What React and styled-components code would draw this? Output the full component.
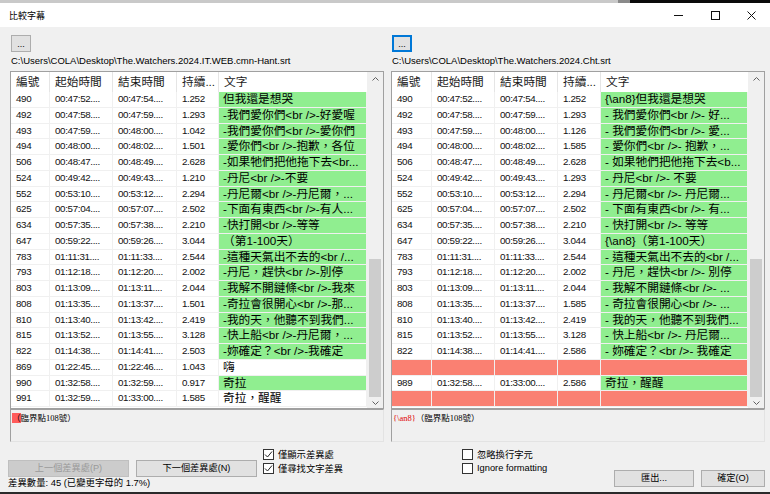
import React from 'react';
import styled, { createGlobalStyle } from 'styled-components';

const GlobalStyle = createGlobalStyle`
  html, body { margin: 0; padding: 0; background: #f0f0f0; overflow: hidden; }
  body { font-family: "Liberation Sans", "Noto Sans CJK TC", sans-serif; }
  #root { width: 770px; height: 494px; }
`;

const UI_FONT = `"Liberation Sans", "Noto Sans CJK TC", sans-serif`;

const Window = styled.div`
  width: 770px;
  height: 494px;
  display: flex;
  flex-direction: column;
  background: #f0f0f0;
  overflow: hidden;
  font-family: ${UI_FONT};
  color: #000;
`;

const TopStrip = styled.div`
  display: flex;
  height: 3px;
  flex: none;
`;

const StripPart = styled.div`
  background: ${(p) => p.$c};
  width: ${(p) => (p.$w ? `${p.$w}px` : 'auto')};
  flex: ${(p) => (p.$w ? 'none' : 1)};
`;

const TitleBar = styled.div`
  height: 24px;
  flex: none;
  background: #fff;
  display: flex;
  align-items: center;
`;

const Title = styled.div`
  flex: 1;
  padding-left: 9px;
  font-size: 9px;
  font-family: "Noto Sans CJK TC", sans-serif;
  color: #000;
`;

const Controls = styled.div`
  display: flex;
  height: 100%;
`;

const CtrlBtn = styled.div`
  width: 36.5px;
  height: 100%;
  display: flex;
  align-items: center;
  justify-content: center;
`;

const Panels = styled.div`
  flex: none;
  display: flex;
  gap: 7px;
  padding: 8px 5px 0 10px;
`;

const Column = styled.div`
  width: 374px;
  display: flex;
  flex-direction: column;
`;

const BrowseBtn = styled.div`
  width: 20px;
  height: 17px;
  margin-left: 1px;
  box-sizing: border-box;
  background: #e1e1e1;
  border: 1px solid ${(p) => (p.$focused ? '#0078d7' : '#adadad')};
  box-shadow: ${(p) => (p.$focused ? 'inset 0 0 0 1px #0078d7' : 'none')};
  font-size: 9px;
  line-height: 16px;
  text-align: center;
  color: #000;
`;

const PathLabel = styled.div`
  height: 19px;
  line-height: 18px;
  padding-left: 1px;
  font-size: 9.5px;
  white-space: nowrap;
  color: #000;
`;

const List = styled.div`
  height: 338px;
  box-sizing: border-box;
  border: 1px solid #a0a0a0;
  background: #fff;
  display: flex;
`;

const ListMain = styled.div`
  flex: 1;
  display: flex;
  flex-direction: column;
  overflow: hidden;
`;

const HeaderRow = styled.div`
  display: grid;
  grid-template-columns: ${(p) => p.$cols};
  height: 20px;
  flex: none;
`;

const HeaderCell = styled.div`
  border-right: 1px solid #e5e5e5;
  padding-left: 5px;
  font-size: 11.7px;
  line-height: 20px;
  white-space: nowrap;
  overflow: hidden;
  color: #1a1a1a;
  &:last-child { border-right: none; }
`;

const Row = styled.div`
  display: grid;
  grid-template-columns: ${(p) => p.$cols};
  height: 15.75px;
  flex: none;
`;

const Cell = styled.div`
  box-sizing: border-box;
  border-right: 1px solid #f0f0f0;
  border-bottom: 1px solid #f0f0f0;
  background: ${(p) => p.$bg || '#fff'};
  padding-left: ${(p) => (p.$text ? 4 : 5)}px;
  font-size: ${(p) => (p.$text ? '11.7px' : '9.8px')};
  letter-spacing: ${(p) => (p.$text ? '0' : '-0.35px')};
  line-height: 14.5px;
  white-space: nowrap;
  overflow: hidden;
  color: ${(p) => (p.$text ? '#000' : '#111')};
`;

const ScrollBar = styled.div`
  width: 16px;
  flex: none;
  background: #f0f0f0;
  display: flex;
  flex-direction: column;
  align-items: center;
`;

const ScrollArrow = styled.div`
  width: 100%;
  height: ${(p) => p.$h}px;
  flex: none;
  display: flex;
  align-items: center;
  justify-content: center;
`;

const ScrollTrack = styled.div`
  flex: 1;
`;

const ScrollThumb = styled.div`
  width: 12px;
  height: 138px;
  flex: none;
  background: #cdcdcd;
`;

const DiffBox = styled.div`
  height: 33px;
  box-sizing: border-box;
  border: 1px solid;
  border-color: #a0a0a0 #e3e3e3 #e3e3e3 #a0a0a0;
  background: #f0f0f0;
  padding: 2px 1px;
  font-family: "Liberation Serif", "Noto Sans CJK TC", serif;
  font-size: 8.5px;
  line-height: 12px;
  white-space: nowrap;
`;

const Marked = styled.span`
  background: #ff5c5c;
`;

const Inserted = styled.span`
  color: #e00000;
`;

const Bottom = styled.div`
  flex: 1;
  display: flex;
  padding: 0 5px 0 8px;
`;

const LeftActions = styled.div`
  width: 249px;
  padding-top: 18px;
  display: flex;
  flex-direction: column;
`;

const ButtonRow = styled.div`
  display: flex;
  gap: 7px;
`;

const Button = styled.div`
  width: ${(p) => p.$w}px;
  height: 17px;
  box-sizing: border-box;
  background: ${(p) => (p.$disabled ? '#cccccc' : '#e1e1e1')};
  border: 1px solid ${(p) => (p.$disabled ? '#bfbfbf' : '#adadad')};
  color: ${(p) => (p.$disabled ? '#9a9a9a' : '#000')};
  font-size: 9.2px;
  line-height: 15px;
  text-align: center;
  white-space: nowrap;
`;

const Status = styled.div`
  height: 12px;
  line-height: 12px;
  font-size: 9.4px;
  white-space: nowrap;
`;

const CheckGroup = styled.div`
  width: ${(p) => p.$w}px;
  margin-left: ${(p) => p.$ml || 0}px;
  padding-top: 5px;
  display: flex;
  flex-direction: column;
`;

const CheckRow = styled.div`
  height: 14px;
  display: flex;
  align-items: center;
  gap: 4px;
  font-size: 9.3px;
  white-space: nowrap;
`;

const Box = styled.div`
  width: 11px;
  height: 11px;
  box-sizing: border-box;
  border: 1px solid #333;
  background: #fff;
  display: flex;
  align-items: center;
  justify-content: center;
  flex: none;
`;

const RightActions = styled.div`
  margin-left: auto;
  padding-top: 28px;
  display: flex;
  gap: 7px;
`;

const BottomEdge = styled.div`
  height: 2px;
  flex: none;
  background: #2a2a2a;
`;

const Chevron = ({ up }) => (
  <svg width="7" height="4" viewBox="0 0 7 4">
    <polyline
      points={up ? '0.5,3.5 3.5,0.5 6.5,3.5' : '0.5,0.5 3.5,3.5 6.5,0.5'}
      fill="none"
      stroke="#606060"
      strokeWidth="1"
    />
  </svg>
);

const Check = ({ checked, label }) => (
  <CheckRow>
    <Box>
      {checked && (
        <svg width="9" height="9" viewBox="0 0 9 9">
          <polyline points="1,4.5 3.5,7 8,1.5" fill="none" stroke="#222" strokeWidth="1" />
        </svg>
      )}
    </Box>
    <span>{label}</span>
  </CheckRow>
);

const GREEN = '#90ee90';
const RED = '#fa8072';

const leftRows = [
  ['490', '00:47:52....', '00:47:54....', '1.252', '但我還是想哭', 'g'],
  ['492', '00:47:58....', '00:47:59....', '1.293', '-我們愛你們<br />-好愛喔', 'g'],
  ['493', '00:47:59....', '00:48:00....', '1.042', '-我們愛你們<br />-愛你們', 'g'],
  ['494', '00:48:00....', '00:48:02....', '1.501', '-愛你們<br />-抱歉，各位', 'g'],
  ['506', '00:48:47....', '00:48:49....', '2.628', '-如果牠們把他拖下去<br...', 'g'],
  ['524', '00:49:42....', '00:49:43....', '1.210', '-丹尼<br />-不要', 'g'],
  ['552', '00:53:10....', '00:53:12....', '2.294', '-丹尼爾<br />-丹尼爾，...', 'g'],
  ['625', '00:57:04....', '00:57:07....', '2.502', '-下面有東西<br />-有人...', 'g'],
  ['634', '00:57:35....', '00:57:38....', '2.210', '-快打開<br />-等等', 'g'],
  ['647', '00:59:22....', '00:59:26....', '3.044', '（第1-100天）', 'g'],
  ['783', '01:11:31....', '01:11:33....', '2.544', '-這種天氣出不去的<br /...', 'g'],
  ['793', '01:12:18....', '01:12:20....', '2.002', '-丹尼，趕快<br />-別停', 'g'],
  ['803', '01:13:09....', '01:13:11....', '2.044', '-我解不開鏈條<br />-我來', 'g'],
  ['808', '01:13:35....', '01:13:37....', '1.501', '-奇拉會很開心<br />-那...', 'g'],
  ['810', '01:13:40....', '01:13:42....', '2.419', '-我的天，他聽不到我們...', 'g'],
  ['815', '01:13:52....', '01:13:55....', '3.128', '-快上船<br />-丹尼爾，...', 'g'],
  ['822', '01:14:38....', '01:14:41....', '2.503', '-妳確定？<br />-我確定', 'g'],
  ['869', '01:22:45....', '01:22:46....', '1.043', '嗨', ''],
  ['990', '01:32:58....', '01:32:59....', '0.917', '奇拉', 'g'],
  ['991', '01:32:59....', '01:33:00....', '1.585', '奇拉，醒醒', ''],
];

const rightRows = [
  ['490', '00:47:52....', '00:47:54....', '1.252', '{\\an8}但我還是想哭', 'g'],
  ['492', '00:47:58....', '00:47:59....', '1.293', '- 我們愛你們<br />- 好...', 'g'],
  ['493', '00:47:59....', '00:48:00....', '1.126', '- 我們愛你們<br />- 愛...', 'g'],
  ['494', '00:48:00....', '00:48:02....', '1.585', '- 愛你們<br />- 抱歉，...', 'g'],
  ['506', '00:48:47....', '00:48:49....', '2.628', '- 如果牠們把他拖下去<b...', 'g'],
  ['524', '00:49:42....', '00:49:43....', '1.293', '- 丹尼<br />- 不要', 'g'],
  ['552', '00:53:10....', '00:53:12....', '2.294', '- 丹尼爾<br />- 丹尼爾...', 'g'],
  ['625', '00:57:04....', '00:57:07....', '2.502', '- 下面有東西<br />- 有...', 'g'],
  ['634', '00:57:35....', '00:57:38....', '2.210', '- 快打開<br />- 等等', 'g'],
  ['647', '00:59:22....', '00:59:26....', '3.044', '{\\an8}（第1-100天）', 'g'],
  ['783', '01:11:31....', '01:11:33....', '2.544', '- 這種天氣出不去的<br /...', 'g'],
  ['793', '01:12:18....', '01:12:20....', '2.002', '- 丹尼，趕快<br />- 別停', 'g'],
  ['803', '01:13:09....', '01:13:11....', '2.044', '- 我解不開鏈條<br />- ...', 'g'],
  ['808', '01:13:35....', '01:13:37....', '1.585', '- 奇拉會很開心<br />- ...', 'g'],
  ['810', '01:13:40....', '01:13:42....', '2.419', '- 我的天，他聽不到我們...', 'g'],
  ['815', '01:13:52....', '01:13:55....', '3.128', '- 快上船<br />- 丹尼爾...', 'g'],
  ['822', '01:14:38....', '01:14:41....', '2.586', '- 妳確定？<br />- 我確定', 'g'],
  ['', '', '', '', '', 'r'],
  ['989', '01:32:58....', '01:33:00....', '2.586', '奇拉，醒醒', 'g'],
  ['', '', '', '', '', 'r'],
];

const headers = ['編號', '起始時間', '結束時間', '持續...', '文字'];

const SubtitleList = ({ cols, rows }) => (
  <List>
    <ListMain>
      <HeaderRow $cols={cols}>
        {headers.map((h) => (
          <HeaderCell key={h}>{h}</HeaderCell>
        ))}
      </HeaderRow>
      {rows.map((r, i) => {
        const red = r[5] === 'r';
        const rowBg = red ? RED : '#fff';
        const textBg = red ? RED : r[5] === 'g' ? GREEN : '#fff';
        return (
          <Row key={i} $cols={cols}>
            <Cell $bg={rowBg}>{r[0]}</Cell>
            <Cell $bg={rowBg}>{r[1]}</Cell>
            <Cell $bg={rowBg}>{r[2]}</Cell>
            <Cell $bg={rowBg}>{r[3]}</Cell>
            <Cell $bg={textBg} $text>{r[4]}</Cell>
          </Row>
        );
      })}
    </ListMain>
    <ScrollBar>
      <ScrollArrow $h={14}>
        <Chevron up />
      </ScrollArrow>
      <ScrollTrack />
      <ScrollThumb />
      <ScrollArrow $h={11}>
        <Chevron />
      </ScrollArrow>
    </ScrollBar>
  </List>
);

export default function App() {
  return (
    <Window>
      <GlobalStyle />
      <TopStrip>
        <StripPart $c="#c9c9c9" $w={618} />
        <StripPart $c="#8a8a8a" $w={12} />
        <StripPart $c="#0a0a0a" />
      </TopStrip>
      <TitleBar>
        <Title>比較字幕</Title>
        <Controls>
          <CtrlBtn>
            <svg width="9" height="1" viewBox="0 0 9 1">
              <rect x="0" y="0" width="9" height="1" fill="#111" />
            </svg>
          </CtrlBtn>
          <CtrlBtn>
            <svg width="9" height="9" viewBox="0 0 9 9">
              <rect x="0.5" y="0.5" width="8" height="8" fill="none" stroke="#111" strokeWidth="1" />
            </svg>
          </CtrlBtn>
          <CtrlBtn>
            <svg width="9" height="9" viewBox="0 0 9 9">
              <path d="M0.5 0.5 L8.5 8.5 M8.5 0.5 L0.5 8.5" stroke="#111" strokeWidth="1" />
            </svg>
          </CtrlBtn>
        </Controls>
      </TitleBar>
      <Panels>
        <Column>
          <BrowseBtn>...</BrowseBtn>
          <PathLabel>C:\Users\COLA\Desktop\The.Watchers.2024.IT.WEB.cmn-Hant.srt</PathLabel>
          <SubtitleList cols="39px 63px 64px 42px 148px" rows={leftRows} />
          <DiffBox>
            <Marked>（</Marked>臨界點108號）
          </DiffBox>
        </Column>
        <Column>
          <BrowseBtn $focused>...</BrowseBtn>
          <PathLabel>C:\Users\COLA\Desktop\The.Watchers.2024.Cht.srt</PathLabel>
          <SubtitleList cols="40px 63px 63px 43px 147px" rows={rightRows} />
          <DiffBox>
            <Inserted>{'{\\an8}'}</Inserted>（臨界點108號）
          </DiffBox>
        </Column>
      </Panels>
      <Bottom>
        <LeftActions>
          <ButtonRow>
            <Button $w={121} $disabled>上一個差異處(P)</Button>
            <Button $w={121}>下一個差異處(N)</Button>
          </ButtonRow>
          <Status>差異數量: 45 (已變更字母的 1.7%)</Status>
        </LeftActions>
        <CheckGroup $w={199} $ml={6}>
          <Check checked label="僅顯示差異處" />
          <Check checked label="僅尋找文字差異" />
        </CheckGroup>
        <CheckGroup $w={140}>
          <Check label="忽略換行字元" />
          <Check label="Ignore formatting" />
        </CheckGroup>
        <RightActions>
          <Button $w={80}>匯出...</Button>
          <Button $w={64}>確定(O)</Button>
        </RightActions>
      </Bottom>
      <BottomEdge />
    </Window>
  );
}
